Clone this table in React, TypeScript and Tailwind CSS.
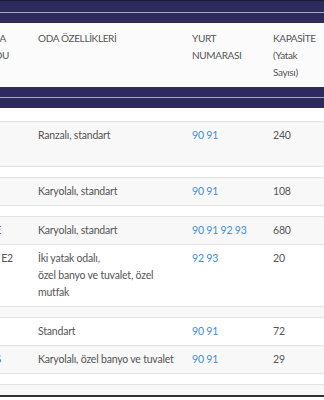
import React from "react";

const NAVY = "bg-[#2d2a5e]";

type Row = {
  bg: "w" | "g";
  c1?: { text: string; pr: string }[];
  c2?: string[];
  c3?: string;
  c4?: string;
  thin?: boolean;
};

const rows: Row[] = [
  { bg: "g", c1: [{ text: "", pr: "pr-0" }, { text: "", pr: "pr-0" }], c2: ["Ranzalı, standart"], c3: "90 91", c4: "240" },
  { bg: "w", thin: true },
  { bg: "g", c2: ["Karyolalı, standart"], c3: "90 91", c4: "108" },
  { bg: "w", thin: true },
  { bg: "g", c1: [{ text: "STANDART ODA TİPİ E", pr: "pr-[29px]" }], c2: ["Karyolalı, standart"], c3: "90 91 92 93", c4: "680" },
  { bg: "w", c1: [{ text: "APART ODA TİPİ E2", pr: "pr-[17px]" }], c2: ["İki yatak odalı,", "özel banyo ve tuvalet, özel", "mutfak"], c3: "92 93", c4: "20" },
  { bg: "g", thin: true },
  { bg: "w", c2: ["Standart"], c3: "90 91", c4: "72" },
  { bg: "g", c1: [{ text: "ÖZEL ODA TİPİ S", pr: "pr-[29px]" }], c2: ["Karyolalı, özel banyo ve tuvalet"], c3: "90 91", c4: "29" },
  { bg: "w", thin: true },
  { bg: "g", thin: true },
];

function Cell1({ lines }: { lines?: { text: string; pr: string }[] }) {
  return (
    <div className="overflow-hidden">
      {(lines ?? [{ text: "", pr: "pr-0" }]).map((l, i) => (
        <div key={i} className={`flex justify-end whitespace-nowrap h-[17px] ${l.pr}`}>
          <span>{l.text}</span>
        </div>
      ))}
    </div>
  );
}

export default function App() {
  return (
    <div
      className="w-[324px] h-[400px] overflow-hidden bg-white text-[10.5px] tracking-[-0.2px] leading-[17px] text-[#555]"
      style={{ fontFamily: "Lato, 'Noto Sans', sans-serif" }}
    >
      {/* top band */}
      <div className="h-px bg-[#1b1a38]" />
      <div className={`h-[11px] ${NAVY}`} />
      <div className="h-px bg-[#a9a7c7]" />
      <div className={`h-[10px] ${NAVY}`} />

      {/* header */}
      <div className="grid grid-cols-[30px_154px_81px_1fr] bg-[#fbfbfb] pt-[7px] pb-[6px] h-[64px] text-[10px] tracking-[-0.35px]">
        <div className="overflow-hidden">
          <div className="flex justify-end whitespace-nowrap h-[17px] pr-[24px]">
            <span>ODA TİPİ VE ODA</span>
          </div>
          <div className="flex justify-end whitespace-nowrap h-[17px] pr-[21px]">
            <span>KODU</span>
          </div>
        </div>
        <div className="px-2">ODA ÖZELLİKLERİ</div>
        <div className="px-2">
          <div>YURT</div>
          <div>NUMARASI</div>
        </div>
        <div className="px-2">
          <div>KAPASİTE</div>
          <div>(Yatak</div>
          <div>Sayısı)</div>
        </div>
      </div>

      {/* second band */}
      <div className={`h-[10px] ${NAVY}`} />
      <div className="h-px bg-[#a9a7c7]" />
      <div className={`h-[10px] ${NAVY}`} />

      {/* body */}
      <div className="h-[13px] bg-white" />
      {rows.map((r, i) => (
        <div
          key={i}
          className={`grid grid-cols-[30px_154px_81px_1fr] border-t border-[#e3e3e3] py-[5px] ${
            r.bg === "g" ? "bg-[#f8f8f8]" : "bg-white"
          }`}
        >
          {r.thin ? (
            <div className="col-span-4 h-0" />
          ) : (
            <>
              <Cell1 lines={r.c1} />
              <div className="px-2">
                {r.c2?.map((t, j) => (
                  <div key={j}>{t}</div>
                ))}
              </div>
              <div className="px-2 text-[#3d8fd6]">{r.c3}</div>
              <div className="px-2">{r.c4}</div>
            </>
          )}
        </div>
      ))}
      <div className="h-[2px] bg-[#333]" />
    </div>
  );
}
